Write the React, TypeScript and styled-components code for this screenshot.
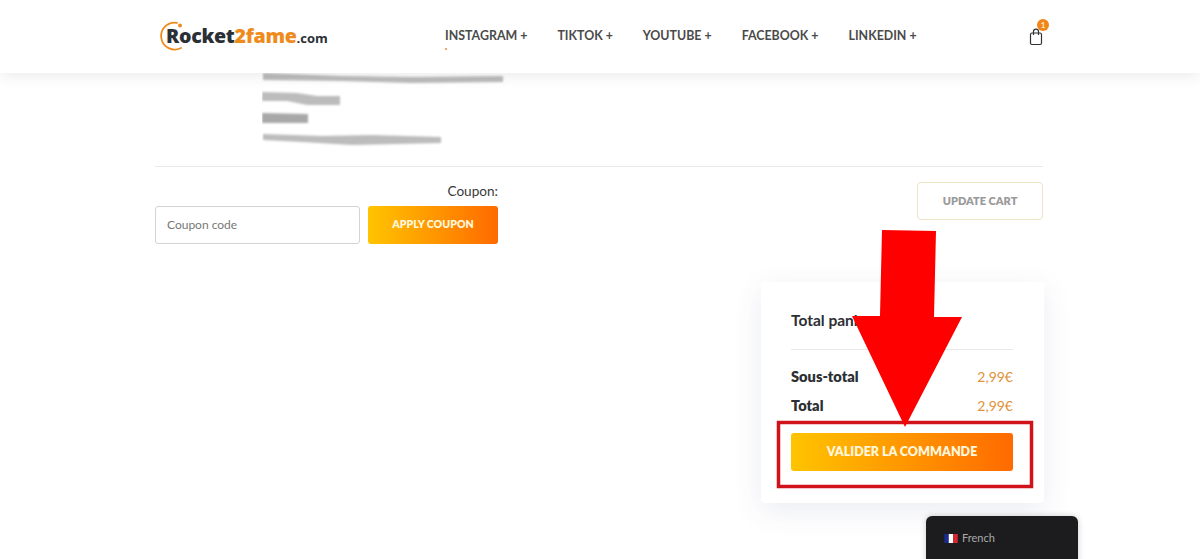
import React from "react";
import styled, { createGlobalStyle } from "styled-components";

const Global = createGlobalStyle`
  html, body { margin: 0; padding: 0; height: 559px; overflow: hidden; background: #fff; }
  body { font-family: "Lato", "Noto Sans", sans-serif; color: #2c2c2c; }
  * { box-sizing: border-box; }
`;

const Page = styled.div`
  position: relative;
  width: 1200px;
  height: 559px;
  overflow: hidden;
`;

const Header = styled.header`
  position: relative;
  z-index: 2;
  height: 73px;
  background: #fff;
  box-shadow: 0 2px 14px rgba(40, 40, 60, 0.1);
  display: flex;
  align-items: center;
  padding: 0 0 2px 158px;
`;

const Logo = styled.div`
  position: relative;
  width: 287px;
  height: 32px;
  display: flex;
  align-items: center;
  flex: none;
`;

const LogoArc = styled.svg`
  position: absolute;
  left: 0;
  top: 0;
`;

const LogoText = styled.span`
  position: relative;
  margin-left: 8px;
  font-family: "Open Sans", sans-serif;
  font-size: 19.6px;
  font-weight: 800;
  letter-spacing: -0.3px;
  color: #2b2f36;
  white-space: nowrap;
`;

const LogoAccent = styled.span`
  color: #ef8a1d;
`;

const LogoDomain = styled.span`
  font-size: 13px;
  font-weight: 700;
  letter-spacing: 0;
`;

const Nav = styled.nav`
  display: flex;
  gap: 30px;
  flex: none;
  width: 584px;
`;

const NavItem = styled.a<{ $active?: boolean }>`
  position: relative;
  font-size: 12.4px;
  font-weight: 700;
  color: #4a4a4a;
  white-space: nowrap;
  ${(p) =>
    p.$active &&
    `&::after { content: ""; position: absolute; left: 0; top: 20px; width: 2px; height: 2px; background: #f0a868; }`}
`;

const Cart = styled.div`
  position: relative;
  width: 14px;
  height: 18px;
  margin-top: 2px;
  flex: none;
`;

const CartBadge = styled.span`
  position: absolute;
  left: 8px;
  top: -9px;
  width: 12px;
  height: 12px;
  border-radius: 50%;
  background: #f0851a;
  color: #ffe9c9;
  font-size: 8px;
  font-weight: 700;
  line-height: 12px;
  text-align: center;
`;

const Main = styled.main`
  width: 888px;
  margin-left: 155px;
`;

const Redaction = styled.svg`
  display: block;
  margin-left: 107px;
`;

const Divider = styled.hr`
  margin: 18px 0 0;
  border: 0;
  border-top: 1px solid #e9e9e6;
`;

const CouponRow = styled.div`
  display: flex;
  justify-content: space-between;
  align-items: flex-start;
  padding-top: 15px;
`;

const CouponBlock = styled.div`
  width: 343px;
  display: flex;
  flex-direction: column;
  align-items: flex-end;
`;

const CouponLabel = styled.label`
  font-size: 13.6px;
  line-height: 19px;
  color: #3a3a3a;
`;

const CouponControls = styled.div`
  display: flex;
  gap: 8px;
  margin-top: 5px;
`;

const CouponInput = styled.div`
  width: 205px;
  height: 38px;
  padding-left: 11px;
  border: 1px solid #d4d4d8;
  border-radius: 3px;
  font-size: 12px;
  line-height: 36px;
  color: #777;
`;

const GradientButton = styled.div`
  background: linear-gradient(90deg, #ffc400, #ff6a00);
  border-radius: 3px;
  color: #fff6dc;
  font-weight: 800;
  text-align: center;
`;

const ApplyButton = styled(GradientButton)`
  width: 130px;
  height: 38px;
  font-size: 10.6px;
  line-height: 36px;
`;

const UpdateButton = styled.div`
  width: 126px;
  height: 38px;
  border: 1px solid #eee3c8;
  border-radius: 4px;
  font-size: 11px;
  font-weight: 800;
  line-height: 35px;
  text-align: center;
  color: #9a9a9a;
`;

const CardRow = styled.div`
  display: flex;
  justify-content: flex-end;
  margin-top: 38px;
`;

const Card = styled.section`
  width: 283px;
  height: 221px;
  margin-right: -1px;
  padding: 28px 31px 0 30px;
  background: #fff;
  border-radius: 4px;
  box-shadow: 0 8px 30px rgba(60, 70, 130, 0.1);
`;

const CardTitle = styled.h2`
  margin: 0;
  padding-bottom: 19px;
  border-bottom: 1px solid #e9e9ec;
  font-size: 15.5px;
  line-height: 20px;
  font-weight: 700;
  color: #2c2f33;
`;

const TotalLine = styled.div`
  display: flex;
  justify-content: space-between;
  height: 29px;
  align-items: center;
  font-size: 14.6px;
  font-weight: 800;
  color: #2c2f33;
`;

const TotalLines = styled.div`
  padding-top: 12px;
`;

const Price = styled.span`
  font-weight: 400;
  font-size: 14px;
  color: #e0913a;
`;

const CheckoutButton = styled(GradientButton)`
  height: 38px;
  margin-top: 13px;
  font-size: 12.5px;
  line-height: 37px;
`;

const Annotation = styled.svg`
  position: absolute;
  left: 0;
  top: 0;
  z-index: 3;
  pointer-events: none;
`;

const LanguageBox = styled.div`
  position: absolute;
  left: 926px;
  top: 516px;
  width: 152px;
  height: 60px;
  z-index: 4;
  padding: 14px 0 0 18px;
  display: flex;
  gap: 4px;
  background: #1c1c1e;
  border-radius: 6px;
  box-shadow: 0 0 6px rgba(0, 0, 0, 0.2);
  font-size: 11px;
  line-height: 16px;
  color: #a9a9a9;
`;

const Flag = styled.svg`
  margin-top: 4px;
  flex: none;
`;

export default function App() {
  return (
    <Page>
      <Global />
      <Header>
        <Logo>
          <LogoArc width="34" height="32" viewBox="0 0 34 32">
            <path d="M19 2.8 A13.5 13.5 0 1 0 23 28" fill="none" stroke="#ef8a1d" strokeWidth="1.8" strokeLinecap="round" />
            <circle cx="22" cy="5.5" r="2" fill="#ef8a1d" />
          </LogoArc>
          <LogoText>
            Rocket<LogoAccent>2fame</LogoAccent>
            <LogoDomain>.com</LogoDomain>
          </LogoText>
        </Logo>
        <Nav>
          <NavItem $active>INSTAGRAM +</NavItem>
          <NavItem>TIKTOK +</NavItem>
          <NavItem>YOUTUBE +</NavItem>
          <NavItem>FACEBOOK +</NavItem>
          <NavItem>LINKEDIN +</NavItem>
        </Nav>
        <Cart>
          <svg width="14" height="18" viewBox="0 0 14 18" fill="none" stroke="#333" strokeWidth="1.2">
            <rect x="1.5" y="5" width="11" height="11.5" rx="1.5" />
            <path d="M4.5 7V3.6a2.5 2.5 0 0 1 5 0V7" />
          </svg>
          <CartBadge>1</CartBadge>
        </Cart>
      </Header>
      <Main>
        <Redaction width="245" height="75" viewBox="0 0 245 75">
          <defs>
            <filter id="smudge">
              <feGaussianBlur stdDeviation="1" />
            </filter>
          </defs>
          <g filter="url(#smudge)" fill="#bcbcbc">
            <path d="M1 0 L80 3 L150 4 L241 3 L241 9 L150 10 L80 8 L1 7 Z" />
            <path d="M0 19 L35 20 L55 23 L78 23 L78 32 L45 32 L25 28 L0 28 Z" />
            <path d="M0 40 L46 41 L46 50 L0 50 Z" fill="#a8a8a8" />
            <path d="M1 61 L60 63 L110 62 L179 64 L179 70 L90 72 L40 69 L1 67 Z" />
          </g>
        </Redaction>
        <Divider />
        <CouponRow>
          <CouponBlock>
            <CouponLabel>Coupon:</CouponLabel>
            <CouponControls>
              <CouponInput>Coupon code</CouponInput>
              <ApplyButton>APPLY COUPON</ApplyButton>
            </CouponControls>
          </CouponBlock>
          <UpdateButton>UPDATE CART</UpdateButton>
        </CouponRow>
        <CardRow>
          <Card>
            <CardTitle>Total panier</CardTitle>
            <TotalLines>
              <TotalLine>
                Sous-total <Price>2,99€</Price>
              </TotalLine>
              <TotalLine>
                Total <Price>2,99€</Price>
              </TotalLine>
            </TotalLines>
            <CheckoutButton>VALIDER LA COMMANDE</CheckoutButton>
          </Card>
        </CardRow>
      </Main>
      <Annotation width="1200" height="559" viewBox="0 0 1200 559">
        <rect x="778.5" y="422.5" width="253" height="64" fill="none" stroke="#d0121b" strokeWidth="3.5" />
        <polygon points="882,230 936,231 934,317 962,317 905,427 852,316 880,316" fill="#fe0000" />
      </Annotation>
      <LanguageBox>
        <Flag width="14" height="9" viewBox="0 0 3 2">
          <rect width="1" height="2" fill="#1a2a8c" />
          <rect x="1" width="1" height="2" fill="#fff" />
          <rect x="2" width="1" height="2" fill="#d8262c" />
        </Flag>
        French
      </LanguageBox>
    </Page>
  );
}
